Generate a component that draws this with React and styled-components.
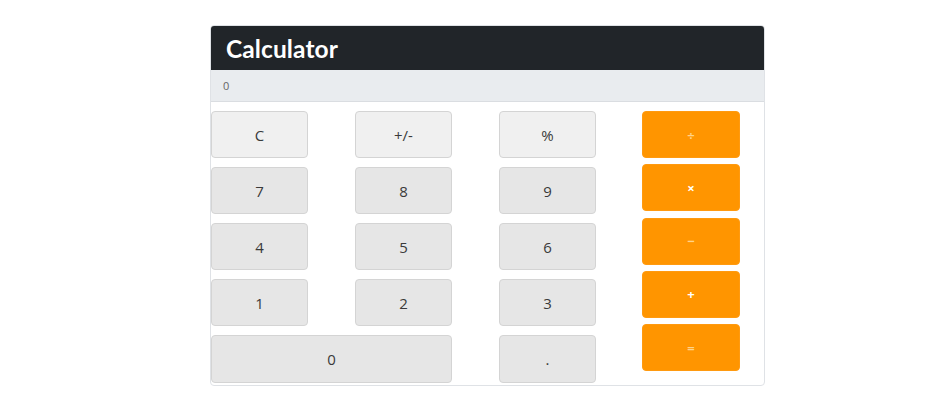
import React from "react";
import styled, { createGlobalStyle } from "styled-components";

const Global = createGlobalStyle`
  html, body { margin: 0; padding: 0; background: #ffffff; }
  body { font-family: "Open Sans", "Liberation Sans", sans-serif; }
`;

const Page = styled.div`
  padding: 25px 0 0 210px;
`;

const Card = styled.div`
  width: 553px;
  border: 1px solid #dfe2e6;
  border-radius: 4px;
  overflow: hidden;
  background: #fff;
`;

const Header = styled.div`
  height: 44px;
  background: #212529;
  display: flex;
  align-items: center;
  padding-left: 15px;
`;

const Title = styled.h1`
  margin: 0;
  font-family: "Lato", "Open Sans", sans-serif;
  font-weight: 700;
  font-size: 24.5px;
  color: #ffffff;
  letter-spacing: 0.1px;
`;

const Display = styled.div`
  height: 31px;
  background: #e9ecef;
  border-bottom: 1px solid #dadde1;
  display: flex;
  align-items: center;
  padding-left: 12px;
  font-size: 11px;
  color: #666;
`;

const Body = styled.div`
  display: flex;
  gap: 46px;
  padding: 9px 0 2px 0;
`;

const Keys = styled.div`
  display: grid;
  grid-template-columns: repeat(3, 97px);
  grid-template-rows: repeat(4, 47px) 48px;
  column-gap: 47px;
  row-gap: 9px;
`;

const Key = styled.button`
  grid-column: span ${(p) => p.$span || 1};
  border: 1px solid #d4d4d4;
  border-radius: 4px;
  background: ${(p) => (p.$light ? "#f0f0f0" : "#e6e6e6")};
  color: #3a3a3a;
  font-family: "Open Sans", "Liberation Sans", sans-serif;
  font-size: 15px;
  padding: 0;
  cursor: pointer;
`;

const Ops = styled.div`
  display: flex;
  flex-direction: column;
  gap: 6.3px;
  width: 98px;
`;

const Op = styled.button`
  height: 47px;
  border: 1px solid #ff9a10;
  border-radius: 4px;
  background: #ff9500;
  color: ${(p) => (p.$faint ? "#ffd38a" : "#ffffff")};
  font-family: "Open Sans", "Liberation Sans", sans-serif;
  font-weight: 700;
  font-size: 13px;
  padding: 0;
  cursor: pointer;
`;

export default function App() {
  const keys = [
    { l: "C", light: true },
    { l: "+/-", light: true },
    { l: "%", light: true },
    { l: "7" }, { l: "8" }, { l: "9" },
    { l: "4" }, { l: "5" }, { l: "6" },
    { l: "1" }, { l: "2" }, { l: "3" },
    { l: "0", span: 2 }, { l: "." },
  ];
  const ops = [
    { l: "÷", faint: true },
    { l: "×" },
    { l: "−", faint: true },
    { l: "+" },
    { l: "=", faint: true },
  ];
  return (
    <>
      <Global />
      <Page>
        <Card>
          <Header>
            <Title>Calculator</Title>
          </Header>
          <Display>0</Display>
          <Body>
            <Keys>
              {keys.map((k) => (
                <Key key={k.l} $light={k.light} $span={k.span}>
                  {k.l}
                </Key>
              ))}
            </Keys>
            <Ops>
              {ops.map((o) => (
                <Op key={o.l} $faint={o.faint}>
                  {o.l}
                </Op>
              ))}
            </Ops>
          </Body>
        </Card>
      </Page>
    </>
  );
}
